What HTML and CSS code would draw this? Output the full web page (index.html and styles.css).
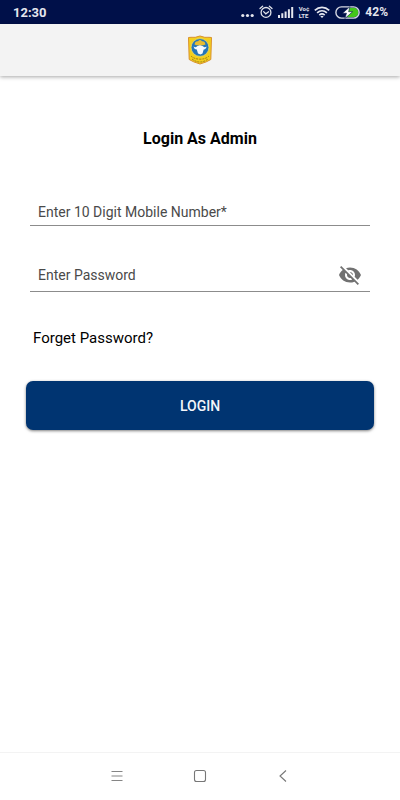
FILE: index.html
```html
<!DOCTYPE html>
<html lang="en">
<head>
  <meta charset="UTF-8" />
  <meta name="viewport" content="width=device-width, initial-scale=1.0" />
  <title>Login As Admin</title>
  <link rel="stylesheet" href="styles.css">
</head>
<body>
  <!-- Status bar -->
  <div class="status-bar">
    <span class="clock">12:30</span>
    <div class="status-icons">
      <svg class="dots" width="13" height="16" viewBox="0 0 13 16" fill="#e4e6ee">
        <circle cx="1.8" cy="11.5" r="1.6" /><circle cx="6.5" cy="11.5" r="1.6" /><circle cx="11.2" cy="11.5" r="1.6" />
      </svg>
      <svg class="alarm" width="14" height="16" viewBox="0 0 14 16" fill="none" stroke="#dfe2ea" stroke-width="1.3" stroke-linecap="round">
        <circle cx="7" cy="8.4" r="4.9" />
        <path d="M1 4.6 3.6 2.3M13 4.6 10.4 2.3M4.6 7.6 6.8 9.8 9.6 7.8" />
      </svg>
      <svg class="signal" width="16" height="16" viewBox="0 0 16 16" fill="#e4e6ee">
        <path d="M0 11h2v3H0zM3.3 9.3h2V14h-2zM6.6 7.5h2V14h-2zM9.9 5.3h2V14h-2zM13.2 3h2v11h-2z" />
      </svg>
      <span class="volte"><span>Vo¢</span><span>LTE</span></span>
      <svg class="wifi" width="16" height="16" viewBox="0 0 16 16" fill="none" stroke="#e4e6ee" stroke-width="1.7">
        <path d="M.8 6.3C5 2.4 11 2.4 15.2 6.3M3.1 8.8C6 6.2 10 6.2 12.9 8.8M5.3 11.1C7 9.7 9 9.7 10.7 11.1" />
        <path d="M6.3 12.2 8 14 9.7 12.2Q8 11.2 6.3 12.2z" fill="#e4e6ee" stroke="none" />
      </svg>
      <svg class="battery" width="25" height="16" viewBox="0 0 25 16">
        <path d="M13 3.8h5.7a4.7 4.7 0 0 1 0 9.4H12z" fill="#43c61b" />
        <rect x=".9" y="2.9" width="23.2" height="11.2" rx="5.6" fill="none" stroke="#d5d8e2" stroke-width="1.4" />
        <path d="M15 2.600 7.500 9.200h4L9.800 14.600 17.600 7.700h-4z" fill="#fff" stroke="#001049" stroke-width=".6" />
      </svg>
      <span class="percent">42%</span>
    </div>
  </div>

  <!-- Header with logo -->
  <header class="header">
    <svg class="logo" width="26" height="30" viewBox="0 0 26 30" role="img" aria-label="Logo">
      <path d="M1.500 2.500 4 2.300Q8 3 13 1 18 3 22 2.300L24.500 2.500 23.800 24.500Q20 27 13 29 6 27 2.200 24.500z" fill="#f3cf1d" stroke="#d9912c" stroke-width="1" />
      <circle cx="13" cy="12.500" r="8.900" fill="#2476b8" stroke="#e9dc75" stroke-width=".7" />
      <path d="M7.500 9.500Q8 5.800 11 6.200 13 3.700 15 6.200 18 5.800 18.500 9.500 16 10.700 13 10.500 10 10.700 7.500 9.500z" fill="#e7bc32" />
      <path d="M6.500 11.500Q9 13 10 11.200L13 10.300 16 11.200Q17.500 13 19.500 11.500 19.300 14.300 16.700 14.400L15.500 18.600 13.500 19.500 11 18.500 9.800 14.500Q7 14.300 6.500 11.500z" fill="#f5faff" />
      <path d="M4 21Q7 24 13 24.200 19 24 22 21M5 24Q9 27 13 27 17 27 21 24" fill="none" stroke="#9b7d17" stroke-width="1" stroke-dasharray="2 1" />
    </svg>
  </header>

  <!-- Login form -->
  <main class="content">
    <h1 class="title">Login As Admin</h1>
    <form class="login-form">
      <div class="field">
        <input type="tel" id="mobile" maxlength="10" placeholder="Enter 10 Digit Mobile Number*" aria-label="Enter 10 Digit Mobile Number">
      </div>
      <div class="field password-field">
        <input type="password" id="password" placeholder="Enter Password" aria-label="Enter Password">
        <button type="button" class="toggle" aria-label="Show password">
          <svg width="24" height="24" viewBox="0 0 24 24" fill="#717171">
            <path d="M12 7c2.760 0 5 2.240 5 5 0 .65-.13 1.260-.36 1.830l2.920 2.920c1.510-1.260 2.700-2.890 3.430-4.750-1.730-4.390-6-7.500-11-7.500-1.400 0-2.740.25-3.980.7l2.160 2.160C10.740 7.130 11.350 7 12 7zM2 4.270l2.280 2.280.46.46C3.080 8.300 1.780 10.020 1 12c1.730 4.390 6 7.500 11 7.500 1.550 0 3.030-.3 4.380-.84l.42.42L19.730 22 21 20.730 3.270 3 2 4.270zM7.530 9.800l1.550 1.550c-.05.21-.08.43-.08.65 0 1.660 1.340 3 3 3 .22 0 .44-.03.65-.08l1.550 1.550c-.67.33-1.410.53-2.200.53-2.760 0-5-2.240-5-5 0-.79.2-1.530.53-2.200zm4.310-.78l3.150 3.150.02-.16c0-1.660-1.340-3-3-3l-.17.01z" />
          </svg>
        </button>
      </div>
      <a href="#" class="forget">Forget Password?</a>
      <button type="submit" class="login-button">LOGIN</button>
    </form>
  </main>

  <!-- System navigation -->
  <nav class="nav-bar">
    <button type="button" aria-label="Menu">
      <svg width="16" height="16" viewBox="0 0 16 16" fill="none" stroke="#858585" stroke-width="1">
        <path d="M2.500 3.500h11M2.500 8h11M2.500 12.500h11" />
      </svg>
    </button>
    <button type="button" aria-label="Home">
      <svg width="16" height="16" viewBox="0 0 16 16" fill="none" stroke="#777" stroke-width="1.100">
        <rect x="2.500" y="2.500" width="11" height="11" rx="2" />
      </svg>
    </button>
    <button type="button" aria-label="Back">
      <svg width="16" height="16" viewBox="0 0 16 16" fill="none" stroke="#777" stroke-width="1.100">
        <path d="M11 2.500 5 8l6 5.500" />
      </svg>
    </button>
  </nav>
</body>
</html>
```

FILE: styles.css
```css
* {
  margin: 0;
  padding: 0;
  box-sizing: border-box;
}

body {
  min-height: 100vh;
  display: flex;
  flex-direction: column;
  background: #fff;
  color: #000;
  font-family: Roboto, sans-serif;
}

button {
  border: none;
  background: none;
  font-family: inherit;
  cursor: pointer;
}

svg {
  display: block;
}

.status-bar {
  height: 24px;
  padding: 0 12px 0 13px;
  display: flex;
  align-items: center;
  justify-content: space-between;
  background: #001049;
  color: #e4e6ee;
  font-weight: 700;
}

.clock {
  font-size: 13px;
}

.percent {
  font-size: 12px;
}

.status-icons {
  display: flex;
  align-items: center;
  gap: 5px;
}

.volte {
  display: flex;
  flex-direction: column;
  font-size: 6px;
  line-height: 7px;
}

.header {
  height: 52px;
  display: flex;
  align-items: center;
  justify-content: center;
  background: #f3f3f3;
  box-shadow: 0 1px 4px rgba(0, 0, 0, 0.35);
}

.content {
  flex-grow: 1;
  padding: 53px 26px 0;
}

.title {
  font-size: 16px;
  line-height: 20px;
  font-weight: 700;
  text-align: center;
}

.login-form {
  display: flex;
  flex-direction: column;
  padding-top: 49px;
}

.field {
  height: 28px;
  margin: 0 4px 32px;
  padding: 0 8px;
  display: flex;
  align-items: center;
  border-bottom: 1px solid #8c8c8c;
}

.password-field {
  height: 34px;
}

.field input {
  flex: 1;
  min-width: 0;
  border: none;
  outline: none;
  background: none;
  color: #000;
  font-family: inherit;
  font-size: 14px;
}

.field input::placeholder {
  color: #4a4a4a;
}

.forget {
  align-self: flex-start;
  margin: 4px 0 33px;
  padding: 0 7px;
  color: #000;
  font-size: 15px;
  line-height: 20px;
  text-decoration: none;
}

.login-button {
  height: 49px;
  border-radius: 7px;
  background: #003471;
  box-shadow: 0 1px 3px rgba(0, 0, 0, 0.5);
  color: #f4f6fa;
  font-size: 14px;
  font-weight: 500;
}

.nav-bar {
  height: 48px;
  padding: 0 76px 2px;
  display: flex;
  align-items: center;
  border-top: 1px solid #f3f3f3;
}

.nav-bar button {
  flex: 1;
  display: flex;
  justify-content: center;
}
```
